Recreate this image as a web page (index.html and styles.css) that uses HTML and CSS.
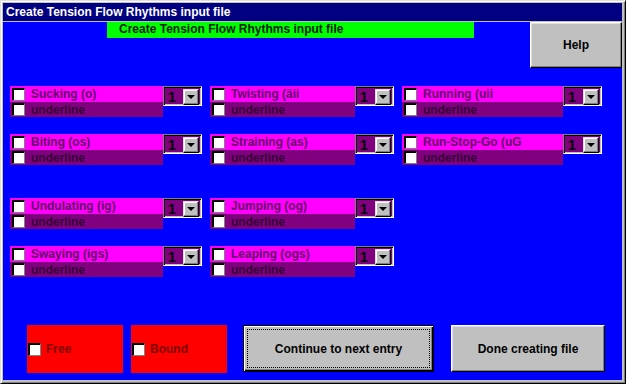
FILE: index.html
```html
<!doctype html>
<html lang="en">
<head>
    <meta charset="UTF-8">
    <title>Create Tension Flow Rhythms input file</title>
    <link rel="stylesheet" href="styles.css">
</head>
<body>
<div class="window">
    <div class="titlebar">Create Tension Flow Rhythms input file</div>
    <div class="client">
        <div class="top">
            <div class="banner">Create Tension Flow Rhythms input file</div>
            <button class="btn help">Help</button>
        </div>

        <div class="grid">
            <div class="item">
                <div class="lab">
                    <div class="main"><span class="chk"></span><span class="txt">Sucking (o)</span></div>
                    <div class="under"><span class="chk"></span><span class="txt">underline</span></div>
                </div>
                <div class="dd"><span class="val">1</span><span class="arrow"></span></div>
            </div>
            <div class="item">
                <div class="lab">
                    <div class="main"><span class="chk"></span><span class="txt">Twisting (äii</span></div>
                    <div class="under"><span class="chk"></span><span class="txt">underline</span></div>
                </div>
                <div class="dd"><span class="val">1</span><span class="arrow"></span></div>
            </div>
            <div class="item">
                <div class="lab">
                    <div class="main"><span class="chk"></span><span class="txt">Running (uii</span></div>
                    <div class="under"><span class="chk"></span><span class="txt">underline</span></div>
                </div>
                <div class="dd"><span class="val">1</span><span class="arrow"></span></div>
            </div>
            <div class="item">
                <div class="lab">
                    <div class="main"><span class="chk"></span><span class="txt">Biting (os)</span></div>
                    <div class="under"><span class="chk"></span><span class="txt">underline</span></div>
                </div>
                <div class="dd"><span class="val">1</span><span class="arrow"></span></div>
            </div>
            <div class="item">
                <div class="lab">
                    <div class="main"><span class="chk"></span><span class="txt">Straining (as)</span></div>
                    <div class="under"><span class="chk"></span><span class="txt">underline</span></div>
                </div>
                <div class="dd"><span class="val">1</span><span class="arrow"></span></div>
            </div>
            <div class="item">
                <div class="lab">
                    <div class="main"><span class="chk"></span><span class="txt">Run-Stop-Go (uG</span></div>
                    <div class="under"><span class="chk"></span><span class="txt">underline</span></div>
                </div>
                <div class="dd"><span class="val">1</span><span class="arrow"></span></div>
            </div>
        </div>

        <div class="grid second">
            <div class="item">
                <div class="lab">
                    <div class="main"><span class="chk"></span><span class="txt">Undulating (ig)</span></div>
                    <div class="under"><span class="chk"></span><span class="txt">underline</span></div>
                </div>
                <div class="dd"><span class="val">1</span><span class="arrow"></span></div>
            </div>
            <div class="item">
                <div class="lab">
                    <div class="main"><span class="chk"></span><span class="txt">Jumping (og)</span></div>
                    <div class="under"><span class="chk"></span><span class="txt">underline</span></div>
                </div>
                <div class="dd"><span class="val">1</span><span class="arrow"></span></div>
            </div>
            <div class="empty"></div>
            <div class="item">
                <div class="lab">
                    <div class="main"><span class="chk"></span><span class="txt">Swaying (igs)</span></div>
                    <div class="under"><span class="chk"></span><span class="txt">underline</span></div>
                </div>
                <div class="dd"><span class="val">1</span><span class="arrow"></span></div>
            </div>
            <div class="item">
                <div class="lab">
                    <div class="main"><span class="chk"></span><span class="txt">Leaping (ogs)</span></div>
                    <div class="under"><span class="chk"></span><span class="txt">underline</span></div>
                </div>
                <div class="dd"><span class="val">1</span><span class="arrow"></span></div>
            </div>
        </div>

        <div class="bottom">
            <div class="flow"><span class="chk"></span><span class="txt">Free</span></div>
            <div class="flow"><span class="chk"></span><span class="txt">Bound</span></div>
            <button class="btn default continue"><span class="focus">Continue to next entry</span></button>
            <button class="btn done">Done creating file</button>
        </div>
    </div>
</div>
</body>
</html>
```

FILE: styles.css
```css
* {
    margin: 0;
    padding: 0;
    box-sizing: border-box;
}

body {
    width: 626px;
    height: 384px;
    background: #c0c0c0;
    font-family: "Liberation Sans", Arial, sans-serif;
    font-size: 12px;
    font-weight: bold;
    overflow: hidden;
}

.window {
    width: 626px;
    height: 384px;
    display: flex;
    flex-direction: column;
    background: #c0c0c0;
    border: 1px solid;
    border-color: #dfdfdf #000 #000 #dfdfdf;
    box-shadow: inset 1px 1px #fff, inset -1px -1px #808080;
    padding: 2px 3px 3px 2px;
}

.titlebar {
    height: 18px;
    line-height: 18px;
    background: #000080;
    color: #fff;
    padding-left: 3px;
    margin-bottom: 1px;
    white-space: nowrap;
}

.client {
    flex: 1;
    background: #0000ff;
}

.top {
    display: flex;
    align-items: flex-start;
    height: 46px;
}

.banner {
    margin-left: 104px;
    width: 367px;
    height: 16px;
    line-height: 15px;
    padding-left: 12px;
    background: #00ff00;
    color: #002200;
}

.btn {
    font-family: "Liberation Sans", Arial, sans-serif;
    font-size: 12px;
    font-weight: bold;
    color: #000;
    background: #c0c0c0;
    border: 1px solid;
    border-color: #fff #000 #000 #fff;
    box-shadow: inset -1px -1px #808080, inset 1px 1px #dfdfdf;
}

.help {
    margin-left: auto;
    width: 92px;
    height: 46px;
}

.grid {
    display: grid;
    grid-template-columns: 192px 184px 200px;
    column-gap: 8px;
    row-gap: 17px;
    padding-left: 7px;
    margin-top: 18px;
}

.grid.second {
    margin-top: 33px;
}

.item {
    display: flex;
    align-items: flex-start;
    height: 31px;
}

.lab {
    flex: 1;
    min-width: 0;
}

.main,
.under {
    display: flex;
    align-items: center;
    overflow: hidden;
    white-space: nowrap;
}

.main {
    height: 16px;
    background: #ff00ff;
    color: #660066;
}

.under {
    height: 15px;
    background: #800080;
    color: #330033;
}

.chk {
    flex: none;
    width: 13px;
    height: 13px;
    margin-left: 2px;
    background: #fff;
    border: 1px solid;
    border-color: #000 #808080 #808080 #000;
    box-shadow: inset 1px 1px #000;
}

.txt {
    padding-left: 6px;
}

.dd {
    flex: none;
    display: flex;
    width: 39px;
    height: 20px;
    border: 1px solid;
    border-color: #808080 #fff #fff #808080;
    box-shadow: inset 1px 1px #000, inset -1px -1px #c0c0c0;
    padding: 2px;
    background: #800080;
}

.val {
    flex: 1;
    line-height: 16px;
    padding-left: 2px;
    color: #000;
    font-size: 14px;
}

.arrow {
    position: relative;
    width: 16px;
    height: 16px;
    background: #c0c0c0;
    border: 1px solid;
    border-color: #dfdfdf #000 #000 #dfdfdf;
    box-shadow: inset -1px -1px #808080, inset 1px 1px #fff;
}

.arrow::after {
    content: "";
    position: absolute;
    left: 3px;
    top: 5px;
    border-left: 4px solid transparent;
    border-right: 4px solid transparent;
    border-top: 4px solid #000;
}

.bottom {
    display: flex;
    margin-top: 48px;
    padding-left: 24px;
}

.flow {
    display: flex;
    align-items: center;
    width: 96px;
    height: 48px;
    background: #ff0000;
    color: #800000;
    margin-right: 8px;
}

.flow .chk {
    margin-left: 1px;
}

.flow .txt {
    padding-left: 5px;
}

.flow + .flow {
    margin-right: 16px;
}

.continue {
    width: 191px;
    height: 47px;
    margin-right: 17px;
    padding: 3px;
    border-color: #000;
    box-shadow: inset 1px 1px #fff, inset -1px -1px #000, inset -2px -2px #808080;
}

.focus {
    display: flex;
    align-items: center;
    justify-content: center;
    height: 100%;
    border: 1px dotted #000;
}

.done {
    width: 154px;
    height: 47px;
}
```
